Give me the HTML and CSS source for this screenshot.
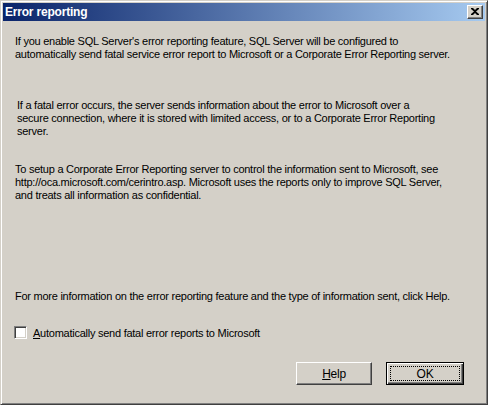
FILE: index.html
```html
<!DOCTYPE html>
<html>
<head>
<meta charset="utf-8">
<link rel="stylesheet" href="styles.css">
</head>
<body>
<div class="window">
  <div class="titlebar">
    <span class="title">Error reporting</span>
    <span class="close">
      <svg width="8" height="7" viewBox="0 0 8 7"><path d="M0 0h2l2 2 2-2h2v1L5 3.5 8 6v1H6L4 5 2 7H0V6l3-2.5L0 1z" fill="#000"/></svg>
    </span>
  </div>
  <div class="content">
    <p class="p1">If you enable SQL Server's error reporting feature, SQL Server will be configured to<br>automatically send fatal service error report to Microsoft or a Corporate Error Reporting server.</p>
    <p class="p2">If a fatal error occurs, the server sends information about the error to Microsoft over a<br>secure connection, where it is stored with limited access, or to a Corporate Error Reporting<br>server.</p>
    <p class="p3">To setup a Corporate Error Reporting server to control the information sent to Microsoft, see<br>http://oca.microsoft.com/cerintro.asp. Microsoft uses the reports only to improve SQL Server,<br>and treats all information as confidential.</p>
    <p class="p4">For more information on the error reporting feature and the type of information sent, click Help.</p>
    <label class="check"><span class="box"></span><span class="label"><u>A</u>utomatically send fatal error reports to Microsoft</span></label>
    <div class="buttons">
      <div class="btn"><span class="cap"><u>H</u>elp</span></div>
      <div class="btn default"><span class="focus">OK</span></div>
    </div>
  </div>
</div>
</body>
</html>
```

FILE: styles.css
```css
html, body {
  margin: 0;
  padding: 0;
  background: #D4D0C8;
}
.window {
  width: 488px;
  height: 405px;
  box-sizing: border-box;
  background: #D4D0C8;
  border-top: 1px solid #D4D0C8;
  border-left: 1px solid #D4D0C8;
  border-right: 1px solid #404040;
  border-bottom: 1px solid #404040;
  box-shadow: inset 1px 1px #FFFFFF, inset -1px -1px #808080;
  padding: 2px 2px 2px 2px;
  display: flex;
  flex-direction: column;
  font-family: "Liberation Sans", Arial, sans-serif;
  font-size: 11px;
  letter-spacing: -0.25px;
  color: #000;
}
.titlebar {
  height: 18px;
  background: linear-gradient(to right, #0A246A, #A6CAF0);
  display: flex;
  align-items: center;
  justify-content: space-between;
  padding: 0 2px 0 2px;
  flex-shrink: 0;
}
.title {
  color: #fff;
  font-weight: bold;
  font-size: 12px;
  letter-spacing: -0.2px;
}
.close {
  width: 16px;
  height: 14px;
  box-sizing: border-box;
  background: #D4D0C8;
  border-top: 1px solid #FFFFFF;
  border-left: 1px solid #FFFFFF;
  border-right: 1px solid #404040;
  border-bottom: 1px solid #404040;
  box-shadow: inset -1px -1px #808080;
  display: flex;
  align-items: center;
  justify-content: center;
  padding: 0 1px 1px 0;
}
.close svg { display: block; }
.content {
  flex: 1;
  display: flex;
  flex-direction: column;
  padding: 0 4px 0 12px;
}
p {
  margin: 0;
  line-height: 13px;
  white-space: nowrap;
}
.p1 { margin-top: 14px; }
.p2 { margin-top: 38px; padding-left: 2px; }
.p3 { margin-top: 25px; }
.p4 { margin-top: 88px; }
.check {
  display: flex;
  align-items: center;
  margin-top: 23px;
  height: 13px;
}
.box {
  width: 13px;
  height: 13px;
  box-sizing: border-box;
  background: #fff;
  border-top: 1px solid #808080;
  border-left: 1px solid #808080;
  border-right: 1px solid #FFFFFF;
  border-bottom: 1px solid #FFFFFF;
  box-shadow: inset 1px 1px #404040, inset -1px -1px #D4D0C8;
  margin-left: -1px;
  margin-right: 6px;
}
.label u, .cap u { text-decoration: underline; text-underline-offset: 1px; }
.buttons {
  display: flex;
  justify-content: flex-end;
  gap: 14px;
  margin-top: 23px;
  padding-right: 17px;
}
.btn {
  width: 76px;
  height: 23px;
  box-sizing: border-box;
  border-top: 1px solid #FFFFFF;
  border-left: 1px solid #FFFFFF;
  border-right: 1px solid #404040;
  border-bottom: 1px solid #404040;
  box-shadow: inset -1px -1px #808080;
  display: flex;
  align-items: center;
  justify-content: center;
}
.btn.default {
  width: 78px;
  border: 1px solid #000;
  box-shadow: inset 1px 1px #FFFFFF, inset -1px -1px #404040, inset -2px -2px #808080;
  padding: 3px;
}
.focus {
  flex: 1;
  align-self: stretch;
  border: 1px dotted #000;
  display: flex;
  align-items: center;
  justify-content: center;
  font-size: 12px;
}
.cap { font-size: 12px; }
```
